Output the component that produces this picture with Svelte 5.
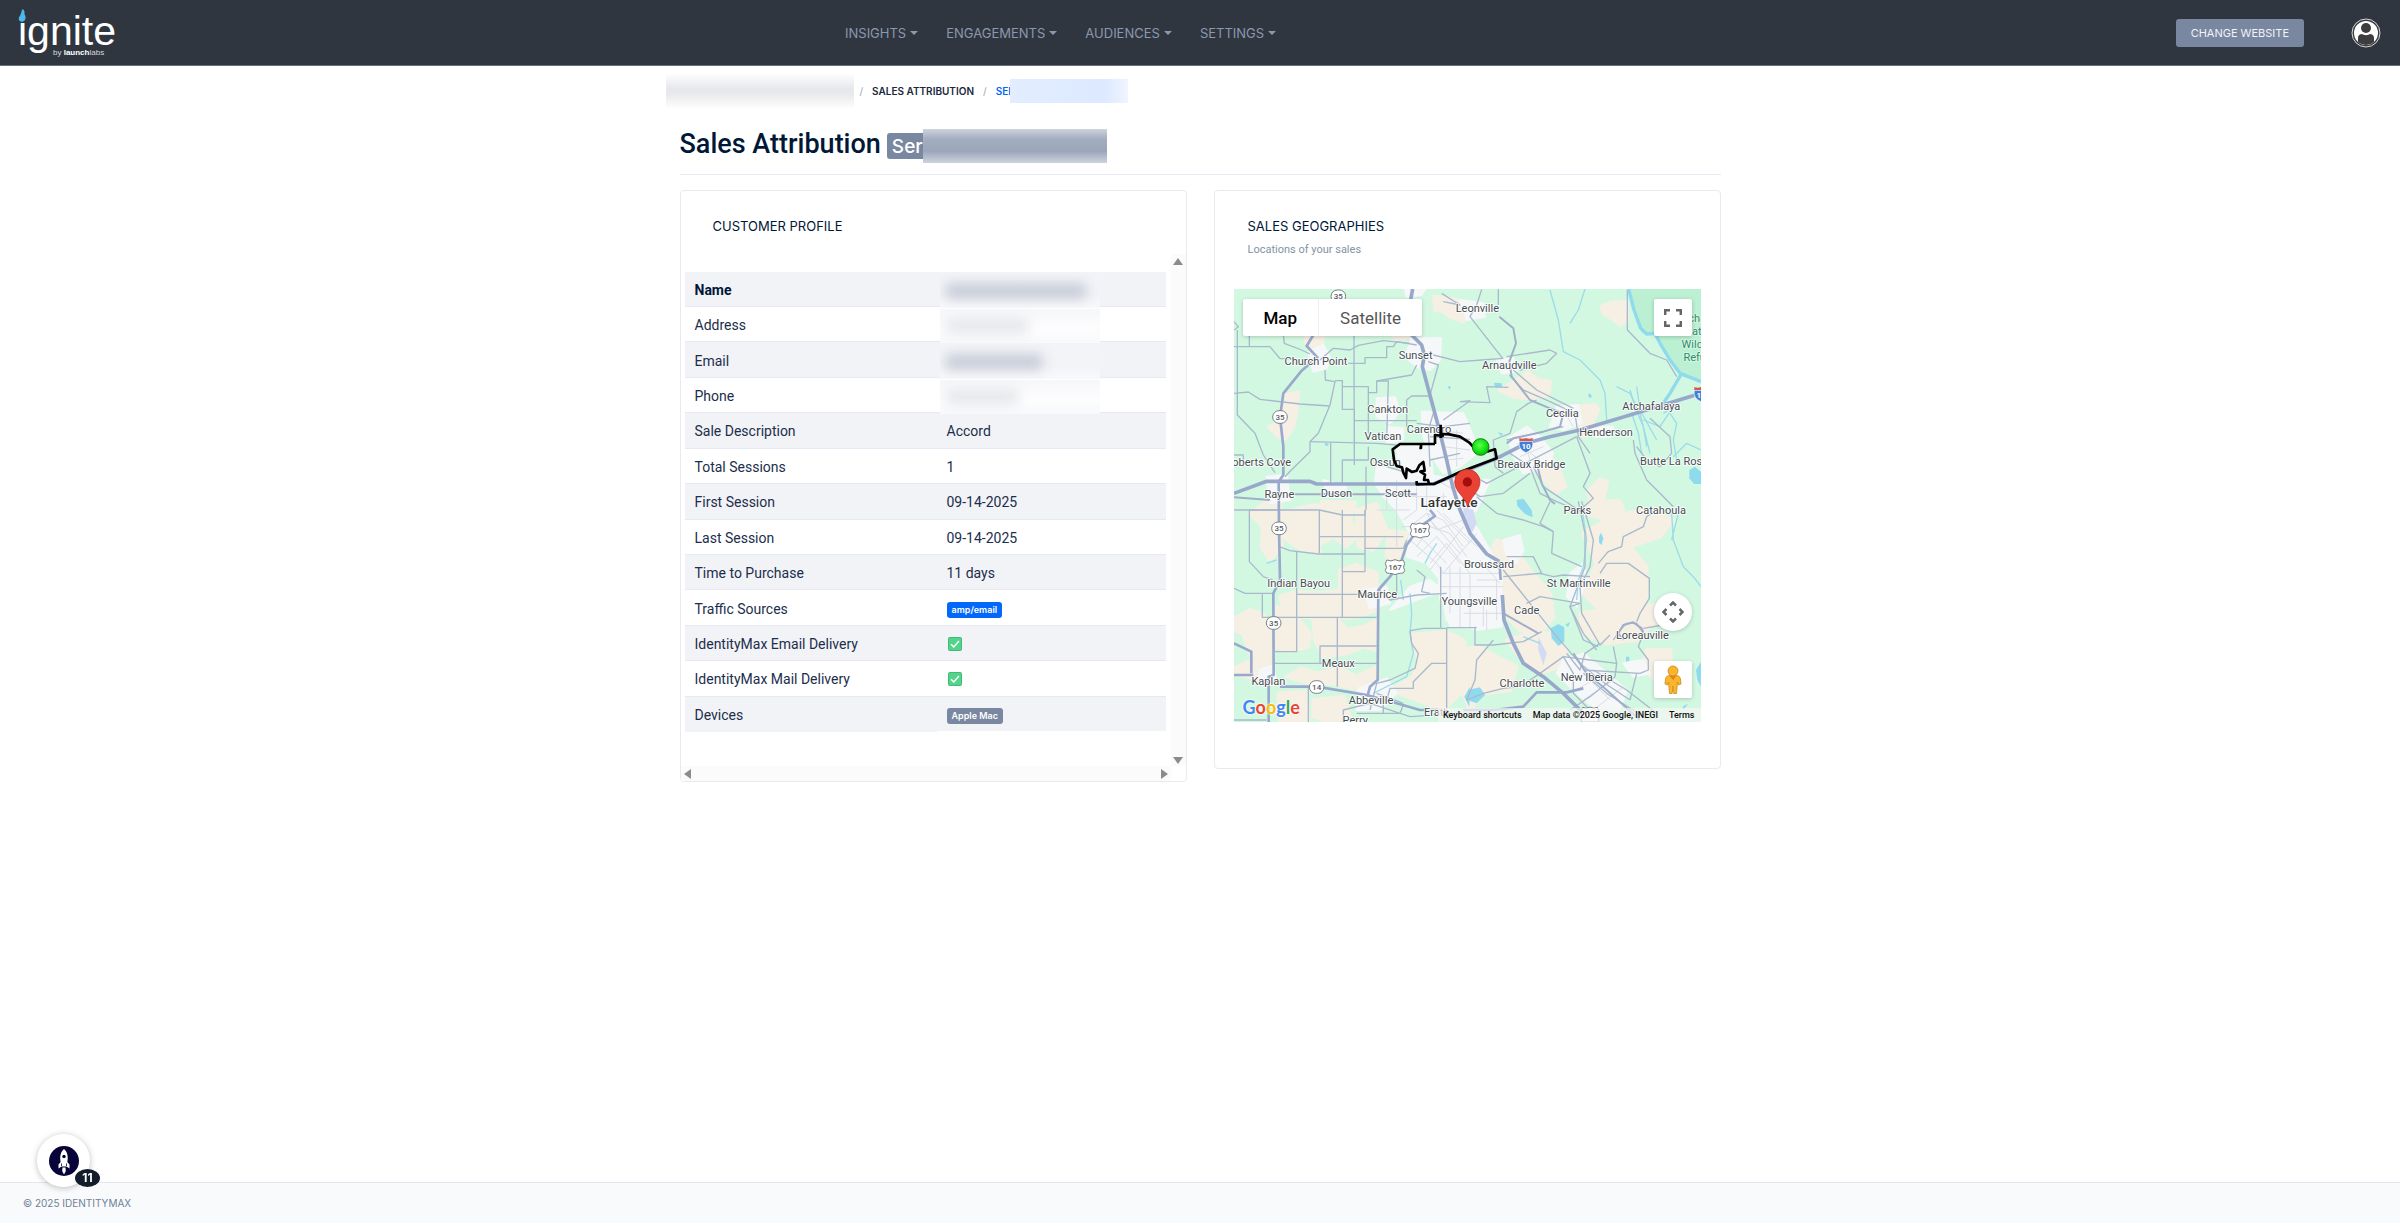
<script lang="ts">
  type Row = {
    label: string;
    value?: string;
    hidden?: number;
    badge?: 'primary' | 'secondary';
    check?: boolean;
  };

  const menu = ['INSIGHTS', 'ENGAGEMENTS', 'AUDIENCES', 'SETTINGS'];

  // `hidden` is the length of the masked value, in pixels
  const rows: Row[] = [
    { label: 'Name', hidden: 140 },
    { label: 'Address', hidden: 82 },
    { label: 'Email', hidden: 96 },
    { label: 'Phone', hidden: 72 },
    { label: 'Sale Description', value: 'Accord' },
    { label: 'Total Sessions', value: '1' },
    { label: 'First Session', value: '09-14-2025' },
    { label: 'Last Session', value: '09-14-2025' },
    { label: 'Time to Purchase', value: '11 days' },
    { label: 'Traffic Sources', value: 'amp/email', badge: 'primary' },
    { label: 'IdentityMax Email Delivery', check: true },
    { label: 'IdentityMax Mail Delivery', check: true },
    { label: 'Devices', value: 'Apple Mac', badge: 'secondary' },
  ];

  // map drawing uses 3 units per pixel
  const towns: [string, number, number][] = [
    ['Church Point', 258, 255],
    ['Sunset', 557, 236],
    ['Leonville', 742, 95],
    ['Arnaudville', 838, 268],
    ['Cankton', 473, 398],
    ['Vatican', 459, 479],
    ['Carencro', 597, 459],
    ['Ossun', 466, 559],
    ['oberts Cove', 95, 559],
    ['Rayne', 148, 655],
    ['Duson', 319, 652],
    ['Scott', 504, 652],
    ['Cecilia', 997, 411],
    ['Henderson', 1128, 469],
    ['Atchafalaya', 1264, 391],
    ['Breaux Bridge', 904, 563],
    ['Butte La Rose', 1332, 554],
    ['Parks', 1042, 702],
    ['Catahoula', 1293, 702],
    ['Broussard', 777, 863],
    ['St Martinville', 1046, 920],
    ['Youngsville', 718, 976],
    ['Cade', 890, 1001],
    ['Maurice', 442, 954],
    ['Indian Bayou', 206, 922],
    ['Meaux', 325, 1162],
    ['Kaplan', 115, 1216],
    ['Abbeville', 423, 1271],
    ['Perry', 376, 1332],
    ['Erath', 620, 1308],
    ['Charlotte', 876, 1220],
    ['New Iberia', 1070, 1202],
    ['Loreauville', 1237, 1078],
  ];

  const refuge: [string, number, number][] = [
    ['Atchafalaya', 1430, 126],
    ['National', 1424, 166],
    ['Wildlife', 1409, 204],
    ['Refuge', 1412, 243],
  ];

  const shields: [string, number, number][] = [
    ['35', 325, 49],
    ['35', 150, 411],
    ['35', 147, 745],
    ['35', 131, 1029],
    ['14', 260, 1221],
  ];

  const usShields: [number, number][] = [
    [570, 750],
    [495, 860],
  ];

  const fields = [
    'M170 345 205 337 200 390 190 440 165 478 140 465 118 440 135 435 150 400 160 370Z',
    'M225 165 280 165 275 200 245 205 230 190Z',
    'M480 160 540 160 545 172 500 176Z',
    'M612 50 680 60 715 100 700 125 660 110 640 92 615 90Z',
    'M1115 80 1145 68 1190 65 1192 120 1170 135 1150 118 1120 100Z',
    'M810 330 860 300 895 278 925 300 960 305 955 345 900 355 850 350Z',
    'M1045 380 1095 375 1105 390 1085 430 1060 470 1045 440Z',
    'M880 480 940 500 985 560 1005 620 975 640 945 600 915 560Z',
    'M1075 635 1110 598 1132 605 1118 665 1080 662Z',
    'M60 700 110 665 150 670 150 740 155 800 120 840 95 800 98 740Z',
    'M150 700 250 675 275 680 260 760 270 820 240 815 200 800 160 770Z',
    'M275 665 375 668 360 720 385 760 350 800 310 770 275 790Z',
    'M380 690 440 672 470 750 430 810 385 800Z',
    'M475 752 530 760 500 850 470 830Z',
    'M330 870 380 855 440 880 440 990 380 1010 300 1015 215 1010 165 1000 150 950 200 935 270 940 330 930Z',
    'M25 1010 60 990 95 1000 130 1040 130 1130 100 1150 60 1120 40 1060 12 1050 12 1015Z',
    'M140 980 200 1010 240 1060 235 1100 180 1115 135 1100Z',
    'M250 1010 320 1015 350 1050 400 1040 440 1020 440 1110 400 1100 350 1120 280 1130 255 1080Z',
    'M12 1165 90 1130 120 1150 90 1200 12 1180Z',
    'M170 1190 215 1165 260 1180 330 1165 380 1190 440 1160 440 1200 400 1230 300 1210 240 1210Z',
    'M145 1240 230 1235 235 1326 150 1326Z',
    'M250 1260 340 1250 360 1310 300 1326 250 1310Z',
    'M545 1065 650 1055 700 1080 720 1160 700 1230 640 1290 560 1260 480 1230 550 1190 565 1140Z',
    'M800 780 850 800 900 870 960 940 970 1010 930 1060 870 1050 830 1010 820 930 770 840Z',
    'M900 1060 960 1060 1010 1110 990 1160 930 1180 870 1130 830 1080Z',
    'M690 1110 750 1100 800 1130 860 1160 840 1230 760 1240 720 1290 700 1240Z',
    'M1060 760 1130 720 1190 700 1260 690 1330 720 1290 770 1200 800 1250 860 1250 960 1200 1000 1120 1000 1060 940 1100 850Z',
    'M1200 980 1290 975 1310 1010 1260 1040 1220 1080 1130 1090 1060 1060 1050 1000Z',
    'M1250 1110 1320 1110 1330 1200 1290 1210 1240 1170Z',
    'M1140 720 1180 690 1170 664 1080 664 1060 700Z',
  ];

  const urban = [
    'M235 215 280 195 300 230 290 265 250 275Z',
    'M545 175 633 175 630 240 600 270 560 260 525 230Z',
    'M525 28 585 28 575 45 530 50Z',
    'M690 60 760 70 765 110 710 120Z',
    'M800 240 850 235 860 275 815 280Z',
    'M440 355 495 352 510 395 480 430 440 410Z',
    'M470 440 520 445 520 480 470 490Z',
    'M575 395 700 400 730 470 740 520 690 560 640 580 600 520 580 470Z',
    'M500 500 600 500 610 600 560 620 510 580Z',
    'M440 560 560 580 690 600 780 600 740 690 700 720 620 700 500 690 460 650 435 610Z',
    'M110 590 170 585 180 660 120 670Z',
    'M280 600 350 620 340 650 290 650Z',
    'M835 475 890 440 930 470 970 520 950 560 880 580 850 530Z',
    'M980 380 1045 375 1055 430 1000 450 960 440Z',
    'M1080 440 1150 440 1140 470 1090 470Z',
    'M500 690 690 680 745 750 790 830 815 880 815 1040 740 1050 650 1020 630 900 590 850 530 830 540 760Z',
    'M625 860 740 860 740 1045 660 1040 650 980 630 960Z',
    'M820 780 870 765 880 810 860 850 830 830Z',
    'M400 930 470 920 480 970 420 985Z',
    'M480 990 640 930 600 900 540 920Z',
    'M90 1170 130 1155 140 1215 85 1215Z',
    'M385 1225 470 1195 500 1240 450 1290 380 1290Z',
    'M1020 880 1060 850 1070 900 1040 980 1010 950Z',
    'M1000 1140 1060 1120 1120 1170 1190 1230 1170 1290 1100 1290 1030 1230 980 1180Z',
    'M1180 1150 1240 1140 1260 1180 1210 1190Z',
  ];

  const minor = [
    // north west
    'M12 200H120L150 236H182L225 258',
    'M58 165V200M160 165 163 190 215 210 240 222',
    'M12 340 55 336 90 358 210 372 300 378',
    'M22 150V405L75 460 100 525 135 578M12 525H40V560',
    'M285 270 286 300 315 305 300 375 265 460 240 485 240 515 184 570 165 590',
    'M240 485 440 490 500 495M302 488V610',
    'M270 240 310 205 360 210 385 196 460 182 540 190',
    'M372 165V250M355 250H405V233H470V200H490L500 185 560 195',
    'M372 250 373 545M337 300V388M315 302H337V388H373V555',
    'M337 320H415V338H440V303L545 285 560 255',
    'M440 303 475 303 470 480M415 338V460M373 422H560',
    'M337 540H415V500M408 560V690M337 540V610',
    'M530 440V360L545 348H600L612 380',
    'M595 245 625 255 600 345M640 420 720 362 690 365',
    'M560 430 640 440 720 430M610 400 595 450 600 560',
    'M470 560 520 575M600 470 720 478M600 540 690 520',
    'M12 150 25 140 12 125',
    // north east
    'M755 28 740 75 720 110 818 235M805 28V75',
    'M635 40 690 75 640 65M610 225 690 245 755 240 820 235',
    'M690 365 780 368 770 320 835 322',
    'M830 230 960 210 980 220 950 250 870 270',
    'M838 285 880 330 960 365 1035 400 1045 470 1080 520',
    'M850 270 920 330 1030 385',
    'M860 395 895 370 920 360M860 395 840 460 790 480 795 560 820 580',
    'M700 570 770 610 1040 470M690 610 750 650 820 640 900 580',
    'M830 480 940 455 1000 440M840 520 900 560 930 640 980 665 1040 690',
    'M910 560 940 620 1060 700M1040 470 1080 580 1060 620 1090 655 1050 690',
    'M740 650 800 700 880 720 940 740 970 755',
    'M1192 30V150L1260 220 1310 240 1340 290',
    'M1260 415 1320 470 1325 520 1290 560 1250 540 1220 500',
    'M1210 480 1215 520 1250 600 1290 640 1330 680',
    'M960 665 930 730 970 755 965 820 1055 860',
    // south west
    'M12 690H147M58 690V845L100 890 128 900',
    'M58 690H268V820M268 690 337 705H405V690',
    'M337 690V1012M268 770H520M405 690V875M337 875H405',
    'M148 800 180 812 265 822H405M405 805H520L530 780',
    'M200 815V1115H135M12 925 45 940H130M200 943H440M97 943V1012H440',
    'M135 1150H440M322 1012V1220M270 1150V1098H440M235 1220V1326',
    'M448 930 480 960 560 945 650 940M500 870V940',
    'M560 870 585 890 575 935 600 940',
    'M632 860V1043M650 1043H740M650 1045V1300',
    'M540 1052 580 1045 650 1045M540 1052 545 1090 565 1120 555 1165 480 1200 440 1210 420 1290',
    'M650 1150H605L550 1205V1225H480L470 1260',
    'M380 1300H510L520 1275M340 1326V1290L420 1270 540 1310 690 1300',
    'M12 1320H110M460 1250V1300M440 1240 520 1270',
    // south east
    'M820 870 900 970 980 1070 1050 1150 1110 1200 1200 1260',
    'M820 890 930 880 970 890 1000 885 1080 890M830 830 910 830 935 880',
    'M890 970 930 950 1050 970M1050 970 1020 980 1060 1060 1100 1110',
    'M1045 664 1065 760 1065 860 1020 980 1060 1080 1105 1100',
    'M1055 664 1090 780 1080 860 1050 920 1055 1000 1110 1095 1140 1065',
    'M1105 850 1130 820 1135 815 1175 800 1180 770 1240 740 1250 710 1280 690',
    'M1110 880 1130 850 1195 850 1258 895V955L1230 1000 1220 1025',
    'M1150 1080 1170 1050 1190 1030H1220L1240 1060 1225 1100 1255 1140V1170L1230 1180 1060 1170',
    'M1240 1045 1300 1035M1110 1090 1065 1120 1050 1170 1010 1120',
    'M735 1040V1095H790L880 1085 935 1055',
    'M790 1080 740 1140 735 1200 710 1260 760 1240 820 1225 870 1220 930 1180 1000 1130 1080 1140 1160 1150 1150 1100',
    'M1160 1150 1155 1190 1080 1250 1020 1290M1220 1180 1200 1260',
    'M1060 1180 1130 1240 1240 1310M1090 1170 1190 1230 1280 1300',
    'M1000 1130 1030 1180 1030 1240 1080 1290',
  ];

  const streets = [
    'M540 740 590 700 640 720 700 800M560 800 600 740 660 760 710 830',
    'M560 830 620 770 690 850M600 850 650 790 720 880M590 700 620 750 700 720',
    'M540 780 620 850 640 880M560 760 650 850M600 720 690 820M640 700 740 800',
    'M620 690 720 790M520 720 560 690M640 880 740 760M600 870 700 740',
    'M660 860V1000M690 860V1040M720 880V1045M632 880H810M632 920H820M660 960H760V1040',
    'M640 640V690M620 600 690 640M560 620V690M590 620V690M500 600V690M520 650H650',
    'M470 620V690M440 690H540M500 690V800M515 740H560',
    'M620 450 700 460M640 500 720 510M650 540 700 535M680 450V560',
    'M1040 1230 1120 1180M1060 1260 1150 1200M1090 1290 1180 1220M1080 1200 1140 1260',
    'M740 900H800V1020M700 1000H820M750 840 810 910M770 990V1050',
    'M860 490 930 540M880 470 900 540M870 530 940 500M1000 390 1030 440',
  ];

  const secondary = [
    'M808 110 850 145 858 190 838 245 845 290 900 360 960 385 1000 400 990 440 940 455 850 475 830 490',
    'M12 652 120 660M190 643H560',
    'M1180 1080 1165 1060 1180 1035 1210 1027 1235 1045 1245 1070',
    'M925 1060 820 1000M920 550 935 610 960 660 975 672',
    'M1030 1120 1070 1180 1130 1230 1230 1320',
  ];

  const primary = [
    'M548 27 542 60 545 165 575 195 583 225 577 260 628 450 650 540 668 620 690 690 720 760 770 822 808 845',
    'M12 640 110 604 240 604 260 612 610 612 800 535 888 490 960 470 1050 450 1200 405 1413 340',
    'M817 945 822 1020 850 1090 880 1150 940 1190 1000 1240 1055 1295 1080 1320',
  ];

  const trunk = [
    'M250 165 230 198 262 232 215 272 160 340 150 411 160 500 160 585 146 605 147 745 150 900 130 940 131 1185 116 1190 116 1326',
    'M600 690 615 708 570 740 530 795 515 840 480 890 445 930 443 1200 420 1220 412 1250',
    'M12 1185H70M150 1220H260L410 1245 500 1270 570 1290H640',
    'M12 1090 64 1115V1180',
    'M700 1290H790L880 1280 920 1237H1010L1060 1225',
    'M808 845 812 900',
  ];

  const streams = [
    'M960 30 985 120 1000 215 1050 240 1110 300 1125 340 1130 420',
    'M1065 27 1045 90 1020 130M1160 320 1200 340 1230 400 1260 520',
    'M1200 330 1215 380 1240 440 1250 500M1220 320 1230 390 1280 480M1205 400 1225 460 1235 520',
    'M1300 400 1330 380 1290 440 1240 420M1320 400 1340 430 1330 480 1340 540',
    'M1325 700 1330 780 1360 860 1390 890 1413 920M1325 780 1345 700',
    'M1055 680 1070 780 1060 860 1045 900 1040 960',
    'M540 940 545 1000 540 1060 550 1120 530 1190 480 1215 430 1240',
    'M512 900 520 960M585 850 600 820 620 790M110 850 140 840',
    'M1413 510 1370 490 1330 530M880 1070 930 1090',
  ];

  const lakes = [
    'M792 308 815 310 816 322 795 322Z',
    'M860 660 880 656 905 690 908 712 885 702 862 678Z',
    'M962 1045 985 1032 1003 1042 1003 1085 985 1098 965 1075Z',
    'M715 1230 750 1222 765 1245 740 1270 712 1260Z',
    'M1107 770 1113 758 1120 775 1115 795 1107 788Z',
    'M1378 570 1395 560 1413 575 1413 612 1392 612 1378 595Z',
    'M1398 1170 1413 1145V1220L1402 1200Z',
    'M1358 1280 1375 1270 1360 1290Z',
    'M703 1250 720 1220 718 1280Z',
    'M1075 340 1085 345 1083 354 1076 352Z',
    'M802 457 818 460 815 468Z',
    'M1005 1035 1020 1026 1015 1040Z',
    'M1188 1130 1198 1130 1198 1142 1188 1145Z',
    'M284 490 296 490 294 497 286 497Z',
    'M652 320 662 318 660 330Z',
  ];
</script>

{#snippet placeLabel(name: string, x: number, y: number)}
  <text {x} {y}>{name}</text>
{/snippet}

<div class="page">
  <header class="topbar">
    <a class="brand" href="#home" aria-label="ignite by launchlabs">
      <svg width="104" height="52" viewBox="0 0 104 52" aria-hidden="true">
        <text class="brand__name" x="0" y="38">ignite</text>
        <path class="brand__mask" d="M0 0h9v14H0z" />
        <path
          class="brand__flame"
          d="M4.500 2C7 3.500 6.500 5.500 6.500 7.500 8 8.500 8.300 13.500 5 14.500 1.500 15.500-.5 12 1.500 9.500 3 7.500 3 5 4.500 2Z"
        />
        <text class="brand__by" x="35" y="48">by <tspan class="brand__bold">launch</tspan>labs</text>
      </svg>
    </a>
    <nav class="menu" aria-label="Main">
      {#each menu as item (item)}
        <a class="menu__link" href="#{item.toLowerCase()}">{item}<span class="menu__caret"></span></a>
      {/each}
    </nav>
    <div class="actions">
      <button class="change" type="button">CHANGE WEBSITE</button>
      <a class="avatar" href="#account" aria-label="Account">
        <svg width="30" height="30" viewBox="0 0 30 30" aria-hidden="true">
          <circle cx="15" cy="15" r="14" fill="#3d3d3f" stroke="#d5d7da" stroke-width="1" />
          <circle cx="15" cy="15" r="12" fill="#fff" />
          <circle cx="15" cy="10" r="5" fill="#3d3d3f" />
          <path d="M7 24v-4c0-3 2-4 4-4 2 1.500 6 1.500 8 0 2 0 4 1 4 4v4a12 12 0 0 1-16 0Z" fill="#3d3d3f" />
        </svg>
      </a>
    </div>
  </header>

  <main class="content">
    <nav class="crumbs" aria-label="Breadcrumb">
      <span class="crumbs__veil"></span>
      <span class="crumbs__sep">/</span>
      <a class="crumbs__link" href="#sales">SALES ATTRIBUTION</a>
      <span class="crumbs__sep">/</span>
      <a class="crumbs__link crumbs__link--current" href="#service">SER<span class="crumbs__tint"></span></a>
    </nav>

    <h1 class="title">
      Sales Attribution
      <span class="title__badge">Ser<span class="title__veil"></span></span>
    </h1>

    <div class="cards">
      <section class="card">
        <h2 class="card__title card__title--inset">CUSTOMER PROFILE</h2>
        <div class="scroller">
          <div class="scroller__body">
            <table class="profile">
              <tbody>
                {#each rows as row, i (row.label)}
                  <tr>
                    <th scope="row" class:strong={i === 0}>{row.label}</th>
                    <td>
                      {#if row.hidden}
                        <span class="veil"><span class="veil__ink" class:veil__ink--dark={i % 2 === 0} style:width="{row.hidden}px"></span></span>
                      {:else if row.check}
                        <svg class="check" width="14" height="14" viewBox="0 0 14 14" role="img" aria-label="Yes">
                          <rect x=".5" y=".5" width="13" height="13" rx="1" fill="#52d48b" stroke="#43b878" />
                          <path d="M3 7.200 5.800 10 11 4" fill="none" stroke="#fff" stroke-width="1.500" />
                        </svg>
                      {:else if row.badge}
                        <span class="badge badge--{row.badge}">{row.value}</span>
                      {:else}
                        {row.value}
                      {/if}
                    </td>
                  </tr>
                {/each}
              </tbody>
            </table>
          </div>
          <div class="track track--y" aria-hidden="true">
            <svg width="10" height="8"><path d="M5 0 10 7H0Z" /></svg>
            <svg width="10" height="8"><path d="M5 8 10 1H0Z" /></svg>
          </div>
          <div class="track track--x" aria-hidden="true">
            <svg width="8" height="10"><path d="M0 5 7 0V10Z" /></svg>
            <svg width="8" height="10"><path d="M8 5 1 0V10Z" /></svg>
          </div>
        </div>
      </section>

      <section class="card card--map">
        <h2 class="card__title">SALES GEOGRAPHIES</h2>
        <p class="card__sub">Locations of your sales</p>
        <div class="map">
          <svg class="map__canvas" viewBox="12 27 1401 1299" preserveAspectRatio="xMidYMid slice" role="img" aria-label="Map of sales around Lafayette">
            <rect x="12" y="27" width="1401" height="1299" fill="#d3f8e2" />
            <path d="M1190 27 1215 95 1235 160 1275 165 1310 225 1350 275 1413 310V27Z" fill="#bbf0d2" />
            <g fill="#f5efe4" stroke="#f5efe4" stroke-width="12" stroke-linejoin="round">
              {#each fields as d}<path {d} />{/each}
            </g>
            <g fill="#f6f7f9" stroke="#f6f7f9" stroke-width="6" stroke-linejoin="round">
              {#each urban as d}<path {d} />{/each}
            </g>
            <path d="M700 680 730 690 740 730 725 760 700 730Z" fill="#d3daf3" />
            <path d="M925 1070 950 1120 940 1155 925 1110Z" fill="#d3daf3" />
            <g fill="#90daee">
              {#each lakes as d}<path {d} />{/each}
            </g>
            <g class="lines" stroke="#9bdcea" stroke-width="4">
              {#each streams as d}<path {d} />{/each}
            </g>
            <path class="lines" d="M1196 27 1212 90 1232 145 1250 162 1275 160 1290 190 1320 240 1350 280 1413 305M1355 280 1320 340 1285 390" stroke="#90daee" stroke-width="10" />
            <g class="lines" stroke="#d9dde6" stroke-width="3">
              {#each streets as d}<path {d} />{/each}
            </g>
            <g class="lines" stroke="#a9b9cc" stroke-width="4">
              {#each minor as d}<path {d} />{/each}
            </g>
            <g class="lines" stroke="#a0afc9" stroke-width="6">
              {#each secondary as d}<path {d} />{/each}
            </g>
            <g class="lines" stroke="#99a9cb" stroke-width="8">
              {#each trunk as d}<path {d} />{/each}
            </g>
            <g class="lines" stroke="#98a8cb" stroke-width="11">
              {#each primary as d}<path {d} />{/each}
            </g>

            <g class="shield">
              {#each shields as [no, x, y]}
                <rect x={x - 22} y={y - 19} width="44" height="38" rx="19" />
                <text {x} y={y + 9}>{no}</text>
              {/each}
              {#each usShields as [x, y]}
                <path d="M{x - 24} {y - 20}q12 6 24-1q12 7 24 1l5 10q-7 12 0 22q-3 10-12 8q-10 0-17 4q-7-4-17-4q-9 2-12-8q7-10 0-22Z" />
                <text {x} y={y + 9}>167</text>
              {/each}
              <path d="M1058 1282q12 6 22-1q12 7 22 1l4 10v34h-52v-34Z" />
            </g>
            {#each [[888, 494], [1413, 341]] as [x, y]}
              <path d="M{x - 20} {y - 10}H{x + 20}Q{x + 25} {y + 14} {x} {y + 24}Q{x - 25} {y + 14} {x - 20} {y - 10}Z" fill="#3f7fd6" stroke="#fff" stroke-width="2" />
              <path d="M{x - 20} {y - 20}q10 5 20 0q10 5 20 0v9h-40Z" fill="#d9534f" />
              <text class="interstate" {x} y={y + 13}>10</text>
            {/each}

            <g class="town">
              {#each towns as [name, x, y]}
                {@render placeLabel(name, x, y)}
              {/each}
            </g>
            <g class="town town--green">
              {#each refuge as [name, x, y]}
                {@render placeLabel(name, x, y)}
              {/each}
            </g>
            <text class="city" x="657" y="681">Lafayette</text>

            <path
              class="area"
              d="M632 434V474M568 492H573V504H568M615 492H510L488 508 492 540 500 558 516 562 520 578 528 594 530 566 546 576 560 572 568 556 580 546 584 572 571 575 585 584 582 600 594 600 597 612 560 613V603M597 612 612 612 690 576 800 535 795 508 775 514 740 512 718 488 690 470 658 463 638 462V468L615 465V492"
            />
            <circle cx="752" cy="501" r="25" fill="url(#dot)" stroke="#1a7a1a" stroke-width="3" />
            <path d="M713 682C707 650 674 636 674 606A38 38 0 0 1 750 606C750 636 719 650 713 682Z" fill="#ea4335" stroke="#c5221f" stroke-width="2" />
            <circle cx="712" cy="606" r="14" fill="#a50e0e" />
            <defs>
              <radialGradient id="dot" cx=".45" cy=".4" r=".65">
                <stop offset="0" stop-color="#5dff4a" />
                <stop offset=".6" stop-color="#12e312" />
                <stop offset="1" stop-color="#0aa80a" />
              </radialGradient>
            </defs>
          </svg>

          <div class="map__types">
            <button class="map__type map__type--on" type="button">Map</button>
            <button class="map__type" type="button">Satellite</button>
          </div>
          <button class="tool tool--full" type="button" aria-label="Toggle fullscreen view">
            <svg width="18" height="18" viewBox="0 0 18 18" fill="none" stroke="#666" stroke-width="2.500">
              <path d="M1.200 6V1.200H6M12 1.200h4.800V6M16.800 12v4.800H12M6 16.800H1.200V12" />
            </svg>
          </button>
          <div class="map__stack">
            <button class="tool tool--round" type="button" aria-label="Map camera controls">
              <svg width="22" height="22" viewBox="0 0 22 22" fill="none" stroke="#666" stroke-width="2.500">
                <path d="M8 4.500 11 1.500 14 4.500M8 17.500 11 20.500 14 17.500M4.500 8 1.500 11 4.500 14M17.500 8 20.500 11 17.500 14" />
              </svg>
            </button>
            <button class="tool" type="button" aria-label="Street View pegman">
              <svg width="18" height="30" viewBox="0 0 18 30" aria-hidden="true">
                <path d="M4.500 10.500H13.500Q16 11 16.500 14L17 19 14.500 20 13.500 17 12.500 28.500H9.800L9 21 8.200 28.500H5.500L4.500 17 3.500 20 1 19 1.500 14Q2 11 4.500 10.500Z" fill="#fbb52c" stroke="#c98a1b" stroke-width=".8" />
                <circle cx="9" cy="6" r="5" fill="#fbb52c" stroke="#c98a1b" stroke-width=".8" />
                <path d="M5.500 11H12.500L9 15Z" fill="#e8811c" />
              </svg>
            </button>
          </div>
          <div class="google" aria-label="Google">
            <span class="g-blue">G</span><span class="g-red">o</span><span class="g-yellow">o</span><span class="g-blue">g</span><span class="g-green">l</span><span class="g-red">e</span>
          </div>
          <div class="legal">
            <button type="button">Keyboard shortcuts</button>
            <span>Map data ©2025 Google, INEGI</span>
            <a href="#terms">Terms</a>
          </div>
        </div>
      </section>
    </div>
  </main>

  <footer class="footer">© 2025 IDENTITYMAX</footer>

  <button class="launcher" type="button" aria-label="Open help, 11 unread">
    <svg width="30" height="30" viewBox="0 0 30 30" aria-hidden="true">
      <circle cx="15" cy="15" r="15" fill="#08043a" />
      <path d="M15 3C18.500 6 19.500 11 18.300 16L20.500 18.500V22.500L17.500 20.500H12.500L9.500 22.500V18.500L11.700 16C10.500 11 11.500 6 15 3Z" fill="#fff" />
      <circle cx="15" cy="10.500" r="1.700" fill="#08043a" />
      <path d="M12.500 17.500V20M17.500 17.500V20" stroke="#08043a" stroke-width=".8" />
      <path d="M13.500 21.500H16.500L16.800 25 15 28.500 13.200 25Z" fill="#fff" />
    </svg>
    <span class="launcher__count">11</span>
  </button>
</div>

<style>
  :global(body) {
    margin: 0;
    background: #fff;
    color: #1b2e4b;
    font-family: Roboto, 'Open Sans', sans-serif;
  }
  .page {
    display: flex;
    flex-direction: column;
    min-height: 100vh;
  }
  a {
    color: inherit;
    text-decoration: none;
  }
  button {
    padding: 0;
    border: 0;
    background: none;
    color: inherit;
    font: inherit;
    cursor: pointer;
  }

  .topbar {
    display: flex;
    align-items: center;
    height: 65px;
    border-bottom: 1px solid #66707c;
    background: #2f3640;
    font-family: Inter, sans-serif;
  }
  .brand {
    flex: 0 0 35%;
    box-sizing: border-box;
    padding-left: 18px;
  }
  .brand svg {
    display: block;
  }
  .brand__name {
    fill: #fff;
    font-family: 'Liberation Sans', Arial, sans-serif;
    font-size: 41px;
  }
  .brand__mask {
    fill: #2f3640;
  }
  .brand__flame {
    fill: #4cb9ea;
  }
  .brand__by {
    fill: #d5d9de;
    font-family: 'Liberation Sans', Arial, sans-serif;
    font-size: 8px;
  }
  .brand__bold {
    fill: #fff;
    font-weight: 700;
  }
  .menu {
    display: flex;
    gap: 28px;
    padding-left: 5px;
    color: #8b98ad;
    font-size: 13px;
  }
  .menu__link {
    display: flex;
    align-items: center;
    gap: 4px;
  }
  .menu__caret {
    border: 4px solid transparent;
    border-top-color: currentColor;
    border-bottom: 0;
  }
  .actions {
    display: flex;
    align-items: center;
    gap: 47px;
    margin-left: auto;
    padding-right: 19px;
  }
  .change {
    height: 28px;
    padding: 0 15px;
    border-radius: 3px;
    background: #7987a1;
    color: #f1f3f7;
    font-size: 11px;
  }
  .avatar svg {
    display: block;
  }

  .content {
    flex: 1;
    width: 1041px;
    max-width: 100%;
    margin: 0 auto;
  }
  .crumbs {
    display: flex;
    align-items: center;
    gap: 9px;
    height: 50px;
    margin-left: -14px;
    font-family: Inter, sans-serif;
    font-size: 10px;
  }
  .crumbs__veil {
    width: 188px;
    height: 36px;
    margin-right: -3px;
    background: linear-gradient(#fff, #e6e7ea 45%, #e9eaec 60%, #fff);
  }
  .crumbs__sep {
    color: #97a3b9;
  }
  .crumbs__link {
    display: flex;
    align-items: center;
    color: #1c273c;
    font-weight: 600;
  }
  .crumbs__link--current {
    color: #0168fa;
  }
  .crumbs__tint {
    width: 118px;
    height: 24px;
    margin-left: -5px;
    background: linear-gradient(90deg, #e3edff, #dce9ff 80%, #f0f5ff);
  }
  .title {
    display: flex;
    align-items: center;
    gap: 6px;
    height: 55px;
    margin: 0;
    padding-bottom: 3px;
    border-bottom: 1px solid #e5e9f2;
    color: #001737;
    font-size: 27px;
    font-weight: 500;
  }
  .title__badge {
    display: flex;
    align-items: center;
    height: 26px;
    margin-top: 5px;
    padding-left: 5px;
    border-radius: 3px;
    background: #7987a1;
    color: #fff;
    font-family: Inter, sans-serif;
    font-size: 19px;
  }
  .title__veil {
    width: 184px;
    height: 34px;
    background: linear-gradient(#ced3dd, #a3adbf 30%, #9ba6ba 65%, #ced3dd);
  }

  .cards {
    display: grid;
    grid-template-columns: 1fr 1fr;
    align-items: start;
    gap: 27px;
    margin-top: 15px;
  }
  .card {
    border: 1px solid #e8eaf1;
    border-radius: 4px;
  }
  .card--map {
    padding: 0 19px 46px;
  }
  .card__title {
    margin: 0;
    padding: 26px 14px 0;
    color: #001737;
    font-family: Inter, sans-serif;
    font-size: 13px;
    font-weight: 400;
    line-height: 18px;
  }
  .card__title--inset {
    padding: 26px 32px 19px;
  }
  .card__sub {
    margin: 7px 14px 32px;
    color: #8392a5;
    font-size: 11px;
    line-height: 15px;
  }
  .scroller {
    display: grid;
    grid-template-columns: 1fr 15px;
    grid-template-rows: 1fr 15px;
  }
  .scroller__body {
    padding: 18px 5px 34px 4px;
  }
  .track {
    display: flex;
    align-items: center;
    justify-content: space-between;
    background: #fbfbfb;
    fill: #8b8b8b;
  }
  .track--y {
    flex-direction: column;
    padding: 4px 0 2px;
  }
  .track--x {
    padding: 0 3px;
  }
  .profile {
    width: 100%;
    height: 460px;
    border-collapse: collapse;
    font-size: 14px;
    line-height: 18px;
  }
  .profile tr:nth-child(odd) {
    background: #f2f3f7;
  }
  .profile th,
  .profile td {
    padding: 2px 10px 0;
    border-bottom: 1px solid #e6e9f1;
    text-align: left;
    font-weight: 400;
  }
  .profile tr:last-child > * {
    border-bottom-color: transparent;
  }
  .profile th {
    box-sizing: border-box;
    width: 252px;
  }
  .profile th.strong {
    color: #001737;
    font-weight: 700;
  }
  .profile td {
    position: relative;
  }
  .veil {
    position: absolute;
    inset: 2px auto -2px 3px;
    display: flex;
    align-items: center;
    overflow: hidden;
    width: 160px;
    padding-left: 6px;
    box-sizing: border-box;
    background: linear-gradient(#f6f7f9, #fdfdfe 60%, #f8f9fb);
  }
  tr:nth-child(odd) .veil {
    background: linear-gradient(#f3f4f8, #f2f3f7 60%, #f8f9fb);
  }
  .veil__ink {
    height: 16px;
    background: #e6e8ec;
    filter: blur(6px);
  }
  .veil__ink--dark {
    background: #c8cdd8;
  }
  .check {
    display: block;
    margin-left: 1px;
  }
  .badge {
    display: block;
    width: fit-content;
    margin-top: 2px;
    padding: 0 5px;
    border-radius: 3px;
    color: #fff;
    font-family: Inter, sans-serif;
    font-size: 9px;
    font-weight: 600;
    line-height: 16px;
  }
  .badge--primary {
    background: #0168fa;
  }
  .badge--secondary {
    background: #7987a1;
  }

  .map {
    position: relative;
    overflow: hidden;
    height: 433px;
  }
  .map__canvas {
    display: block;
    width: 100%;
    height: 100%;
  }
  .lines {
    fill: none;
    stroke-linejoin: round;
  }
  .town {
    fill: #444b50;
    stroke: #fff;
    stroke-width: 5px;
    stroke-linejoin: round;
    paint-order: stroke;
    font-size: 33px;
    text-anchor: middle;
  }
  .town--green {
    fill: #2f8a68;
    stroke: #d8f8e6;
  }
  .city {
    fill: #303437;
    stroke: #fff;
    stroke-width: 5px;
    paint-order: stroke;
    font-size: 41px;
    font-weight: 500;
    text-anchor: middle;
  }
  .shield {
    fill: #fff;
    stroke: #7d8287;
    stroke-width: 3px;
  }
  .shield text {
    fill: #555a5f;
    stroke: none;
    font-size: 24px;
    font-weight: 500;
    text-anchor: middle;
  }
  .interstate {
    fill: #fff;
    font-size: 24px;
    font-weight: 700;
    text-anchor: middle;
  }
  .area {
    fill: none;
    stroke: #000;
    stroke-width: 8px;
    stroke-linejoin: round;
  }
  .map__types {
    position: absolute;
    top: 10px;
    left: 9px;
    display: flex;
    height: 37px;
    border-radius: 2px;
    background: #fff;
    box-shadow: 0 1px 4px rgb(0 0 0 / 20%);
  }
  .map__type {
    padding: 0 21px;
    color: #565656;
    font-size: 17px;
  }
  .map__type--on {
    border-right: 1px solid #eee;
    color: #000;
    font-weight: 500;
  }
  .tool {
    display: grid;
    place-items: center;
    width: 38px;
    height: 37px;
    border-radius: 2px;
    background: #fff;
    box-shadow: 0 1px 4px rgb(0 0 0 / 20%);
  }
  .tool--round {
    height: 38px;
    border-radius: 50%;
  }
  .tool--full {
    position: absolute;
    top: 10px;
    right: 9px;
  }
  .map__stack {
    position: absolute;
    right: 9px;
    bottom: 24px;
    display: grid;
    gap: 30px;
  }
  .google {
    position: absolute;
    bottom: 3px;
    left: 9px;
    display: flex;
    font-family: Lato, sans-serif;
    font-size: 18px;
    line-height: 24px;
    text-shadow: 0 0 2px #fff, 0 0 2px #fff;
    font-weight: 700;
  }
  .g-blue {
    color: #4285f4;
  }
  .g-red {
    color: #ea4335;
  }
  .g-yellow {
    color: #fbbc04;
  }
  .g-green {
    color: #34a853;
  }
  .legal {
    position: absolute;
    right: 0;
    bottom: 0;
    display: flex;
    gap: 11px;
    padding: 0 6px 0 5px;
    background: rgb(245 245 245 / 70%);
    color: #111;
    font-size: 9px;
    font-weight: 500;
    line-height: 14px;
  }

  .footer {
    padding: 0 23px;
    border-top: 1px solid #e2e6ee;
    background: #f9fafc;
    color: #6f7f98;
    font-family: Inter, sans-serif;
    font-size: 10px;
    line-height: 40px;
  }
  .launcher {
    position: fixed;
    bottom: 36px;
    left: 37px;
    display: grid;
    place-items: center;
    width: 53px;
    height: 53px;
    border-radius: 50%;
    background: #fff;
    box-shadow: 0 1px 6px rgb(0 0 0 / 25%);
  }
  .launcher__count {
    position: absolute;
    right: -10px;
    bottom: 0;
    width: 25px;
    border-radius: 50%;
    background: #131c2b;
    color: #fff;
    font-family: Inter, sans-serif;
    font-size: 12px;
    font-weight: 700;
    line-height: 18px;
  }
</style>
